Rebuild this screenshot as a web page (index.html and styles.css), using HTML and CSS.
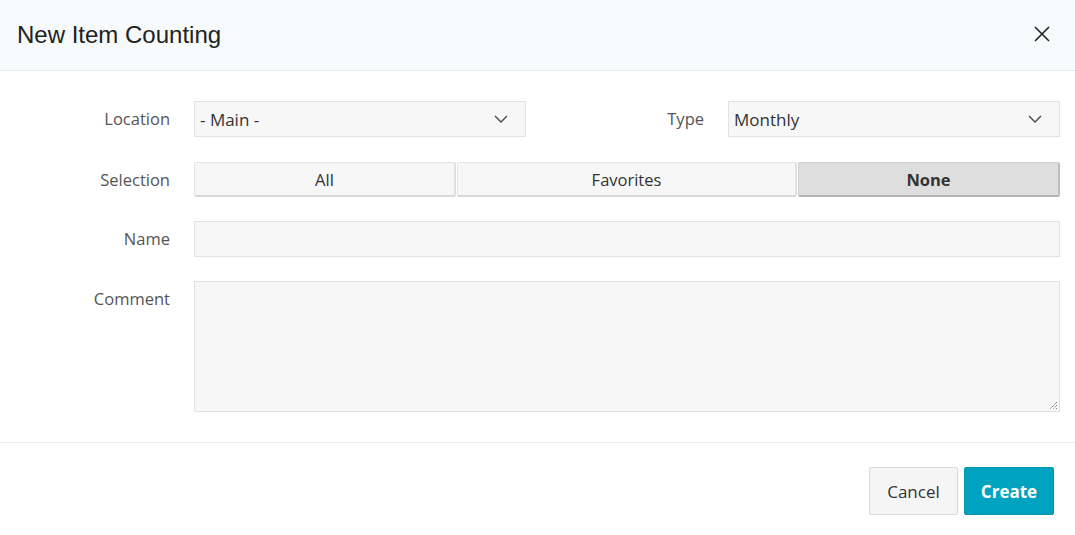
FILE: index.html
```html
<!DOCTYPE html>
<html lang="en">
<head>
<meta charset="utf-8">
<title>New Item Counting</title>
<link rel="stylesheet" href="styles.css">
</head>
<body>
<div class="modal">
  <header class="modal-header">
    <h1 class="modal-title">New Item Counting</h1>
    <button class="close" aria-label="Close">
      <svg width="16" height="16" viewBox="0 0 16 16"><path d="M1 1 L15 15 M15 1 L1 15" stroke="#222" stroke-width="1.6" fill="none"/></svg>
    </button>
  </header>

  <form class="modal-body">
    <div class="row row-first">
      <label class="label">Location</label>
      <div class="control split">
        <div class="select half">
          <span>- Main -</span>
          <svg class="chev" width="14" height="8" viewBox="0 0 14 8"><path d="M1 1 L7 7 L13 1" stroke="#444" stroke-width="1.3" fill="none"/></svg>
        </div>
        <label class="label inline">Type</label>
        <div class="select half">
          <span>Monthly</span>
          <svg class="chev" width="14" height="8" viewBox="0 0 14 8"><path d="M1 1 L7 7 L13 1" stroke="#444" stroke-width="1.3" fill="none"/></svg>
        </div>
      </div>
    </div>

    <div class="row">
      <label class="label label-seg">Selection</label>
      <div class="control segmented">
        <button type="button" class="seg seg-side">All</button>
        <button type="button" class="seg seg-mid">Favorites</button>
        <button type="button" class="seg seg-side active">None</button>
      </div>
    </div>

    <div class="row">
      <label class="label">Name</label>
      <div class="control"><div class="input"></div></div>
    </div>

    <div class="row">
      <label class="label">Comment</label>
      <div class="control">
        <div class="textarea">
          <svg class="grip" width="9" height="9" viewBox="0 0 9 9"><path d="M8 1 L1 8 M8 4 L4 8 M8 7 L7 8" stroke="#555" stroke-width="1" stroke-dasharray="1 1" fill="none"/></svg>
        </div>
      </div>
    </div>
  </form>

  <footer class="modal-footer">
    <button class="btn btn-default">Cancel</button>
    <button class="btn btn-primary">Create</button>
  </footer>
</div>
</body>
</html>
```

FILE: styles.css
```css
* { box-sizing: border-box; }

body {
  margin: 0;
  background: #fff;
  font-family: "Open Sans", "Noto Sans", sans-serif;
  color: #333;
}

.modal {
  width: 1075px;
  height: 535px;
  background: #fff;
}

.modal-header {
  height: 71px;
  background: #f7fafb;
  border-bottom: 1px solid #e6eaeb;
  display: flex;
  align-items: center;
  justify-content: space-between;
  padding: 0 25px 0 17px;
}

.modal-title {
  margin: 0;
  font-family: "Liberation Sans", Arial, sans-serif;
  font-weight: normal;
  font-size: 24px;
  color: #222;
  padding-bottom: 1px;
}

.close {
  border: 0;
  background: none;
  padding: 0;
  width: 16px;
  height: 16px;
  display: flex;
  margin-bottom: 3px;
}

.modal-body {
  padding: 30px 15px 30px 0;
  display: flex;
  flex-direction: column;
  gap: 24px;
  border-bottom: 1px solid #ececec;
}

.row {
  display: flex;
  align-items: flex-start;
}

.row-first { margin-bottom: 1px; }

.label {
  flex: 0 0 170px;
  text-align: right;
  margin-right: 24px;
  font-size: 16.5px;
  line-height: 36px;
  color: #555;
}

.label-seg { line-height: 35px; }

.label.inline {
  flex: 1;
  margin: 0 24px 0 0;
}

.control {
  flex: 1;
}

.split {
  display: flex;
  align-items: center;
}

.select {
  height: 36px;
  border: 1px solid #e2e2e2;
  background: #f7f7f7;
  display: flex;
  align-items: center;
  justify-content: space-between;
  padding: 0 17px 0 5px;
  font-size: 17px;
  color: #333;
}

.half { flex: 0 0 332px; }

.chev { display: block; }

.segmented {
  display: flex;
  height: 35px;
}

.seg {
  font-family: inherit;
  font-size: 16.5px;
  color: #333;
  background: #f7f7f7;
  border-style: solid;
  border-width: 1px 2px 2px 1px;
  border-color: #e4e4e4 #e0e0e0 #d8d8d8 #e4e4e4;
  border-radius: 2px;
  padding: 0;
  margin-right: 1px;
}

.seg-side { flex: 0 0 262px; }
.seg-mid { flex: 1; }

.seg.active {
  background: #dedede;
  border-color: #cfcfcf #bdbdbd #b5b5b5 #cfcfcf;
  font-weight: bold;
  margin-right: 0;
}

.input {
  height: 36px;
  border: 1px solid #e2e2e2;
  background: #f7f7f7;
}

.textarea {
  height: 131px;
  border: 1px solid #e2e2e2;
  background: #f7f7f7;
  display: flex;
  justify-content: flex-end;
  align-items: flex-end;
  padding: 0 1px 1px 0;
}

.grip { display: block; }

.modal-footer {
  display: flex;
  justify-content: flex-end;
  gap: 6px;
  padding: 24px 21px 0 0;
}

.btn {
  height: 48px;
  font-family: inherit;
  font-size: 17px;
  border-radius: 2px;
  padding: 0;
}

.btn-default {
  width: 89px;
  background: #f5f5f5;
  border: 1px solid #d9d9d9;
  color: #333;
}

.btn-primary {
  width: 90px;
  background: #00a3bf;
  border: 1px solid #0096b0;
  color: #fff;
  font-weight: bold;
}
```
